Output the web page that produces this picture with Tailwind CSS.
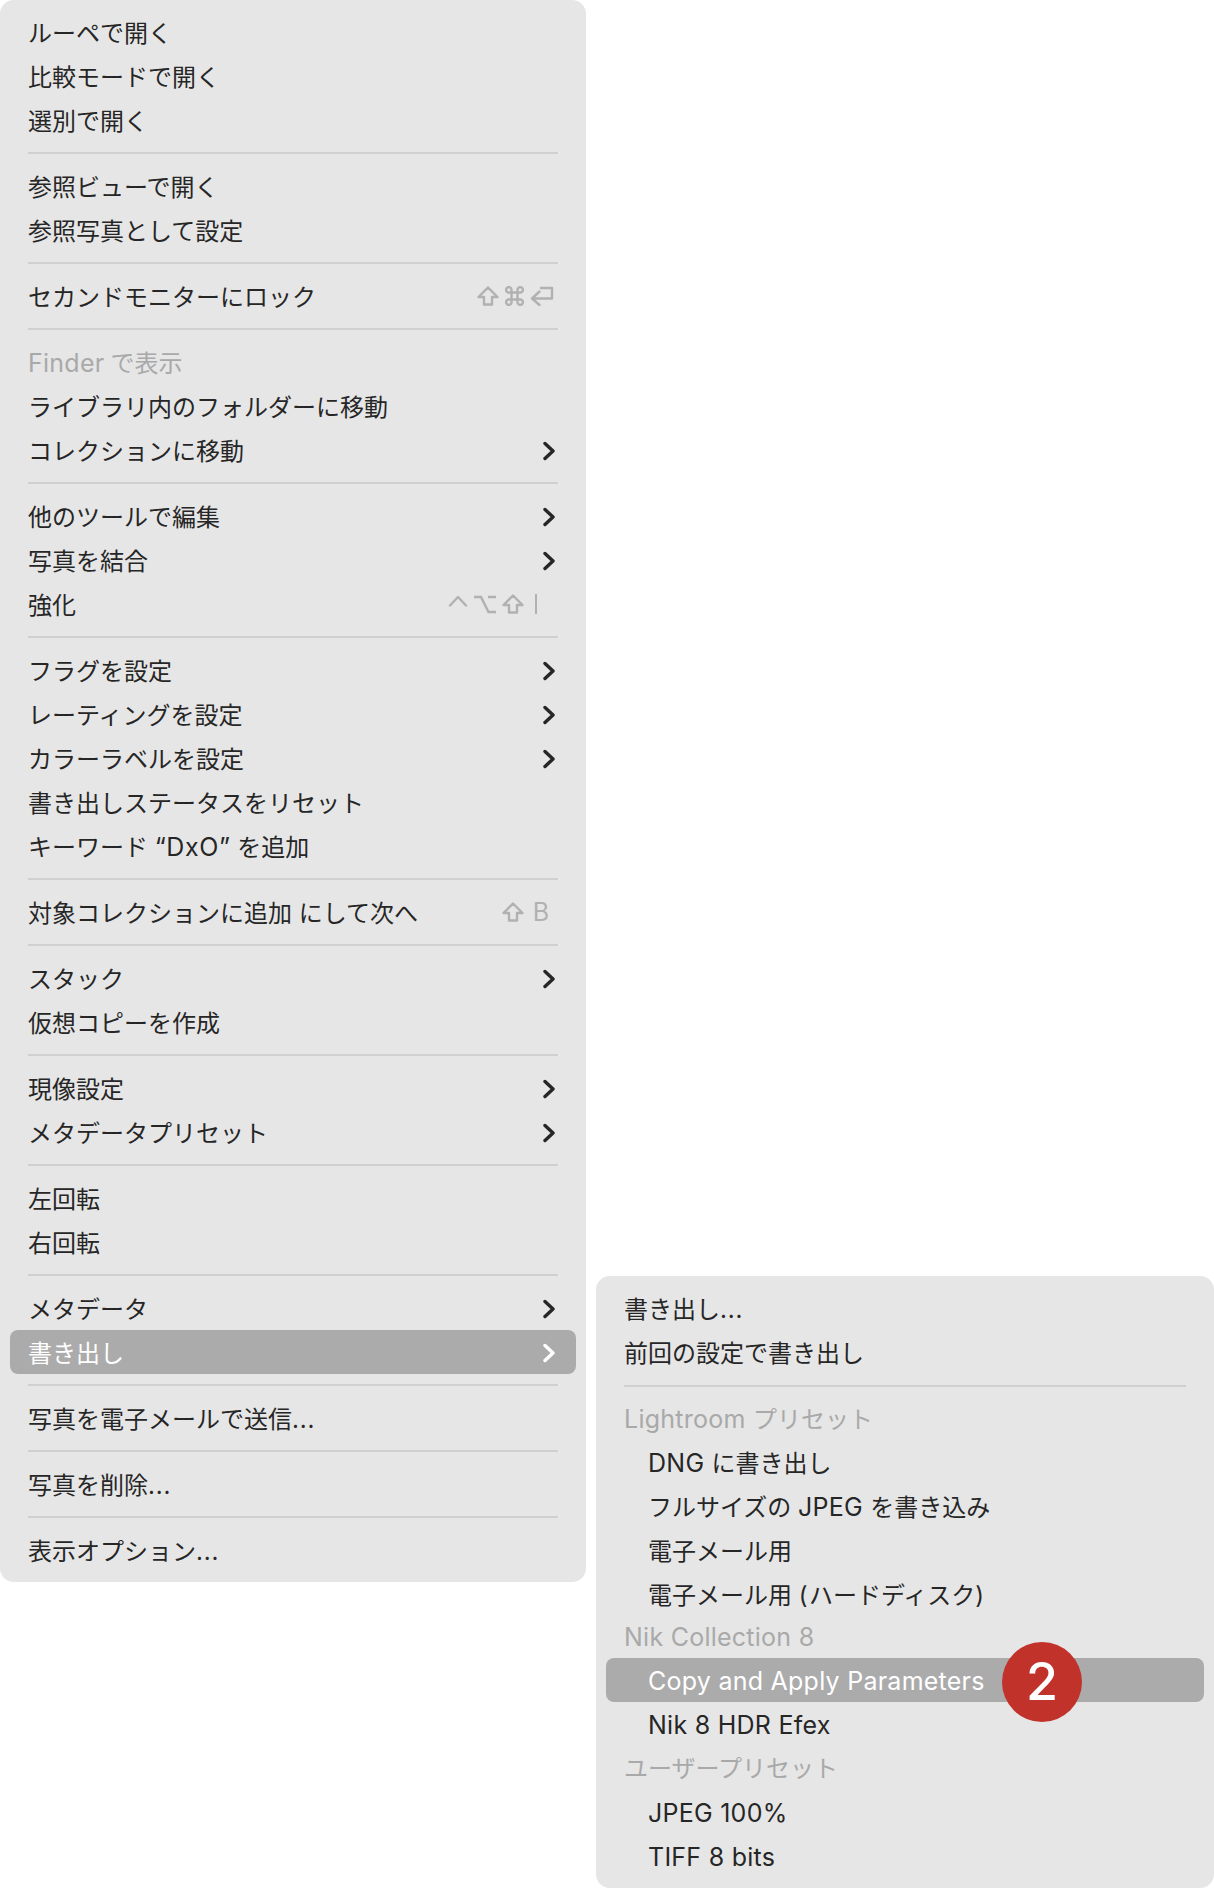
<!DOCTYPE html>
<html lang="ja">
<head>
<meta charset="utf-8">
<title>Menu</title>
<script src="https://cdn.jsdelivr.net/npm/@tailwindcss/browser@4"></script>
</head>
<body class="bg-white">
<div class="flex items-start w-[1214px] h-[1888px] overflow-hidden font-['Inter','Noto_Sans_CJK_JP',sans-serif] text-[24px] text-[#262626]">

  <!-- main menu -->
  <div class="w-[586px] h-[1582px] pt-[10px] rounded-[14px] bg-[#e6e6e6] shrink-0">
    <div class="h-[44px] pt-[3px] px-[28px] flex items-center">ルーペで開く</div>
    <div class="h-[44px] pt-[3px] px-[28px] flex items-center">比較モードで開く</div>
    <div class="h-[44px] pt-[3px] px-[28px] flex items-center">選別で開く</div>
    <div class="mx-[28px] my-[10px] h-[2px] bg-[#d0d0d0]"></div>
    <div class="h-[44px] pt-[3px] px-[28px] flex items-center">参照ビューで開く</div>
    <div class="h-[44px] pt-[3px] px-[28px] flex items-center">参照写真として設定</div>
    <div class="mx-[28px] my-[10px] h-[2px] bg-[#d0d0d0]"></div>
    <div class="h-[44px] pl-[28px] pr-[32px] flex items-center justify-between">
      <span class="pt-[3px]">セカンドモニターにロック</span>
      <span class="flex items-center gap-[6px]">
        <svg class="w-[22px] h-[20px]" viewBox="0 0 22 20" fill="none" stroke="#b1b1b1" stroke-width="2.4" stroke-linejoin="round"><path d="M11 1.5 1.5 11H7V18.5H15V11H20.5Z"/></svg>
        <svg class="w-[19px] h-[20px]" viewBox="0 0 19 20" fill="none" stroke="#b1b1b1" stroke-width="2.4"><path d="M6.5 6.5H12.5V13.5H6.5ZM6.5 6.5H4A2.7 2.7 0 1 1 6.5 4ZM12.5 6.5V4A2.7 2.7 0 1 1 15 6.5ZM12.5 13.5H15A2.7 2.7 0 1 1 12.5 16ZM6.5 13.5V16A2.7 2.7 0 1 1 4 13.5Z"/></svg>
        <svg class="w-[24px] h-[20px]" viewBox="0 0 24 20" fill="none" stroke="#b1b1b1" stroke-width="2.4" stroke-linejoin="round" stroke-linecap="round"><path d="M11 2H22V12.5H2.5M9.5 5.5 2 12.5 9.5 19"/></svg>
      </span>
    </div>
    <div class="mx-[28px] my-[10px] h-[2px] bg-[#d0d0d0]"></div>
    <div class="h-[44px] pt-[3px] px-[28px] flex items-center gap-[6px] text-[#a9a9a9]"><span class="text-[25px] tracking-[0.25px]">Finder</span><span>で表示</span></div>
    <div class="h-[44px] pt-[3px] px-[28px] flex items-center">ライブラリ内のフォルダーに移動</div>
    <div class="h-[44px] pt-[3px] pl-[28px] pr-[31px] flex items-center justify-between"><span>コレクションに移動</span><svg class="w-[12px] h-[20px] -translate-y-[1px]" viewBox="0 0 12 20" fill="none" stroke="#262626" stroke-width="3.4" stroke-linecap="round" stroke-linejoin="round"><path d="M2 2.5 10 10 2 17.5"/></svg></div>
    <div class="mx-[28px] my-[10px] h-[2px] bg-[#d0d0d0]"></div>
    <div class="h-[44px] pt-[3px] pl-[28px] pr-[31px] flex items-center justify-between"><span>他のツールで編集</span><svg class="w-[12px] h-[20px] -translate-y-[1px]" viewBox="0 0 12 20" fill="none" stroke="#262626" stroke-width="3.4" stroke-linecap="round" stroke-linejoin="round"><path d="M2 2.5 10 10 2 17.5"/></svg></div>
    <div class="h-[44px] pt-[3px] pl-[28px] pr-[31px] flex items-center justify-between"><span>写真を結合</span><svg class="w-[12px] h-[20px] -translate-y-[1px]" viewBox="0 0 12 20" fill="none" stroke="#262626" stroke-width="3.4" stroke-linecap="round" stroke-linejoin="round"><path d="M2 2.5 10 10 2 17.5"/></svg></div>
    <div class="h-[44px] pl-[28px] pr-[49px] flex items-center justify-between">
      <span class="pt-[3px]">強化</span>
      <span class="flex items-center gap-[6px]">
        <svg class="w-[20px] h-[20px]" viewBox="0 0 20 20" fill="none" stroke="#b1b1b1" stroke-width="2.4" stroke-linecap="round" stroke-linejoin="round"><path d="M2 11.5 10 3 18 11.5"/></svg>
        <svg class="w-[22px] h-[20px]" viewBox="0 0 22 20" fill="none" stroke="#b1b1b1" stroke-width="2.4"><path d="M0 3H7L14.5 18H22M14 3H22"/></svg>
        <svg class="w-[22px] h-[20px]" viewBox="0 0 22 20" fill="none" stroke="#b1b1b1" stroke-width="2.4" stroke-linejoin="round"><path d="M11 1.5 1.5 11H7V18.5H15V11H20.5Z"/></svg>
        <span class="w-[2px] h-[20px] ml-[5px] bg-[#b1b1b1]"></span>
      </span>
    </div>
    <div class="mx-[28px] my-[10px] h-[2px] bg-[#d0d0d0]"></div>
    <div class="h-[44px] pt-[3px] pl-[28px] pr-[31px] flex items-center justify-between"><span>フラグを設定</span><svg class="w-[12px] h-[20px] -translate-y-[1px]" viewBox="0 0 12 20" fill="none" stroke="#262626" stroke-width="3.4" stroke-linecap="round" stroke-linejoin="round"><path d="M2 2.5 10 10 2 17.5"/></svg></div>
    <div class="h-[44px] pt-[3px] pl-[28px] pr-[31px] flex items-center justify-between"><span>レーティングを設定</span><svg class="w-[12px] h-[20px] -translate-y-[1px]" viewBox="0 0 12 20" fill="none" stroke="#262626" stroke-width="3.4" stroke-linecap="round" stroke-linejoin="round"><path d="M2 2.5 10 10 2 17.5"/></svg></div>
    <div class="h-[44px] pt-[3px] pl-[28px] pr-[31px] flex items-center justify-between"><span>カラーラベルを設定</span><svg class="w-[12px] h-[20px] -translate-y-[1px]" viewBox="0 0 12 20" fill="none" stroke="#262626" stroke-width="3.4" stroke-linecap="round" stroke-linejoin="round"><path d="M2 2.5 10 10 2 17.5"/></svg></div>
    <div class="h-[44px] pt-[3px] px-[28px] flex items-center">書き出しステータスをリセット</div>
    <div class="h-[44px] pt-[3px] px-[28px] flex items-center whitespace-pre">キーワード <span class="text-[25px] tracking-[0.6px]">“DxO”</span> を追加</div>
    <div class="mx-[28px] my-[10px] h-[2px] bg-[#d0d0d0]"></div>
    <div class="h-[44px] pl-[28px] pr-[37px] flex items-center justify-between">
      <span class="pt-[3px]">対象コレクションに追加 にして次へ</span>
      <span class="flex items-center gap-[9px]">
        <svg class="w-[22px] h-[20px]" viewBox="0 0 22 20" fill="none" stroke="#b1b1b1" stroke-width="2.4" stroke-linejoin="round"><path d="M11 1.5 1.5 11H7V18.5H15V11H20.5Z"/></svg>
        <span class="text-[#b1b1b1] text-[25px] leading-none">B</span>
      </span>
    </div>
    <div class="mx-[28px] my-[10px] h-[2px] bg-[#d0d0d0]"></div>
    <div class="h-[44px] pt-[3px] pl-[28px] pr-[31px] flex items-center justify-between"><span>スタック</span><svg class="w-[12px] h-[20px] -translate-y-[1px]" viewBox="0 0 12 20" fill="none" stroke="#262626" stroke-width="3.4" stroke-linecap="round" stroke-linejoin="round"><path d="M2 2.5 10 10 2 17.5"/></svg></div>
    <div class="h-[44px] pt-[3px] px-[28px] flex items-center">仮想コピーを作成</div>
    <div class="mx-[28px] my-[10px] h-[2px] bg-[#d0d0d0]"></div>
    <div class="h-[44px] pt-[3px] pl-[28px] pr-[31px] flex items-center justify-between"><span>現像設定</span><svg class="w-[12px] h-[20px] -translate-y-[1px]" viewBox="0 0 12 20" fill="none" stroke="#262626" stroke-width="3.4" stroke-linecap="round" stroke-linejoin="round"><path d="M2 2.5 10 10 2 17.5"/></svg></div>
    <div class="h-[44px] pt-[3px] pl-[28px] pr-[31px] flex items-center justify-between"><span>メタデータプリセット</span><svg class="w-[12px] h-[20px] -translate-y-[1px]" viewBox="0 0 12 20" fill="none" stroke="#262626" stroke-width="3.4" stroke-linecap="round" stroke-linejoin="round"><path d="M2 2.5 10 10 2 17.5"/></svg></div>
    <div class="mx-[28px] my-[10px] h-[2px] bg-[#d0d0d0]"></div>
    <div class="h-[44px] pt-[3px] px-[28px] flex items-center">左回転</div>
    <div class="h-[44px] pt-[3px] px-[28px] flex items-center">右回転</div>
    <div class="mx-[28px] my-[10px] h-[2px] bg-[#d0d0d0]"></div>
    <div class="h-[44px] pt-[3px] pl-[28px] pr-[31px] flex items-center justify-between"><span>メタデータ</span><svg class="w-[12px] h-[20px] -translate-y-[1px]" viewBox="0 0 12 20" fill="none" stroke="#262626" stroke-width="3.4" stroke-linecap="round" stroke-linejoin="round"><path d="M2 2.5 10 10 2 17.5"/></svg></div>
    <div class="h-[44px] pt-[3px] mx-[10px] pl-[18px] pr-[21px] rounded-[8px] bg-[#ababab] text-white flex items-center justify-between"><span>書き出し</span><svg class="w-[12px] h-[20px] -translate-y-[1px]" viewBox="0 0 12 20" fill="none" stroke="#ffffff" stroke-width="3.4" stroke-linecap="round" stroke-linejoin="round"><path d="M2 2.5 10 10 2 17.5"/></svg></div>
    <div class="mx-[28px] my-[10px] h-[2px] bg-[#d0d0d0]"></div>
    <div class="h-[44px] pt-[3px] px-[28px] flex items-center">写真を電子メールで送信<span class="tracking-[0.8px]">...</span></div>
    <div class="mx-[28px] my-[10px] h-[2px] bg-[#d0d0d0]"></div>
    <div class="h-[44px] pt-[3px] px-[28px] flex items-center">写真を削除<span class="tracking-[0.8px]">...</span></div>
    <div class="mx-[28px] my-[10px] h-[2px] bg-[#d0d0d0]"></div>
    <div class="h-[44px] pt-[3px] px-[28px] flex items-center">表示オプション<span class="tracking-[0.8px]">...</span></div>
  </div>

  <!-- submenu -->
  <div class="relative w-[618px] h-[612px] mt-[1276px] ml-[10px] pt-[11px] rounded-[14px] bg-[#e6e6e6] shrink-0">
    <div class="h-[44px] pt-[1px] px-[28px] flex items-center">書き出し<span class="tracking-[0.8px]">...</span></div>
    <div class="h-[44px] pt-[2px] px-[28px] flex items-center">前回の設定で書き出し</div>
    <div class="mx-[28px] my-[10px] h-[2px] bg-[#d0d0d0]"></div>
    <div class="h-[44px] pt-[1px] px-[28px] flex items-center whitespace-pre text-[#a9a9a9]"><span class="text-[25px] tracking-[0.25px]">Lightroom </span>プリセット</div>
    <div class="h-[44px] pt-[2px] pl-[52px] flex items-center whitespace-pre"><span class="text-[25px] tracking-[0.25px]">DNG </span>に書き出し</div>
    <div class="h-[44px] pt-[2px] pl-[52px] flex items-center whitespace-pre">フルサイズの <span class="text-[25px] tracking-[0.25px]">JPEG </span>を書き込み</div>
    <div class="h-[44px] pt-[2px] pl-[52px] flex items-center">電子メール用</div>
    <div class="h-[44px] pt-[2px] pl-[52px] flex items-center whitespace-pre">電子メール用 <span class="tracking-[1.5px]">(</span>ハードディスク<span class="tracking-[0.8px]">)</span></div>
    <div class="h-[41px] px-[28px] flex items-center text-[25px] tracking-[0.25px] text-[#a9a9a9]">Nik Collection 8</div>
    <div class="h-[44px] pt-[3px] mx-[10px] pl-[42px] rounded-[8px] bg-[#ababab] text-white flex items-center text-[25px] tracking-[0.25px]">Copy and Apply Parameters</div>
    <div class="h-[44px] pt-[3px] pl-[52px] flex items-center text-[25px] tracking-[0.25px]">Nik 8 HDR Efex</div>
    <div class="h-[44px] pt-[2px] px-[28px] flex items-center text-[#a9a9a9]">ユーザープリセット</div>
    <div class="h-[44px] pt-[3px] pl-[52px] flex items-center text-[25px] tracking-[0.25px]">JPEG 100%</div>
    <div class="h-[44px] pt-[3px] pl-[52px] flex items-center text-[25px] tracking-[0.25px]">TIFF 8 bits</div>
    <div class="absolute left-[406px] top-[366px] w-[80px] h-[80px] rounded-full bg-[#c1322a] text-white flex items-center justify-center text-[52px] font-medium leading-none">2</div>
  </div>
</div>
</body>
</html>
